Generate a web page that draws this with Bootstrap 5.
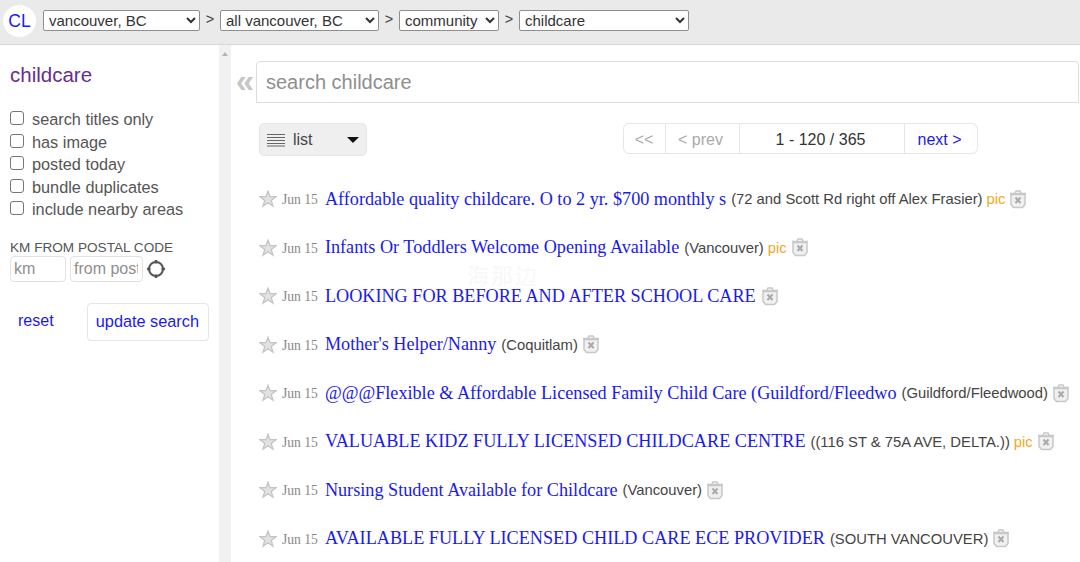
<!doctype html>
<html lang="en">

<head>
  <meta charset="utf-8" />
  <meta name="viewport" content="width=device-width, initial-scale=1" />
  <title>vancouver, BC childcare - craigslist</title>
  <link href="https://cdn.jsdelivr.net/npm/bootstrap@5.3.5/dist/css/bootstrap.min.css" rel="stylesheet" />
  <style>
    html, body {
      height: 562px;
      overflow: hidden;
    }

    body {
      font-family: "Liberation Sans", Arial, sans-serif;
      color: #333;
      background: #fff;
    }

    .top-bar {
      height: 45px;
      background: #eaeaea;
      border-bottom: 1px solid #d8d8d8;
      padding: 0 0 2px 3px;
      font-size: 14.5px;
    }

    .cl-logo {
      width: 33px;
      height: 32px;
      border-radius: 50%;
      background: #fff;
      color: #1a1aff;
      font-size: 17.5px;
      margin-right: 7px;
    }

    .crumb-select {
      height: 21px;
      padding: 0 0 0 1px;
      margin-bottom: 2px;
      font-size: 15px;
      color: #333;
      background-color: #fff;
      border: 1px solid #8f8f8f;
      border-radius: 2px;
    }

    .crumb-sep {
      width: 20px;
      margin-bottom: 2px;
      text-align: center;
      color: #444;
    }

    .page-body {
      height: 517px;
      position: relative;
    }

    .side-panel {
      width: 219px;
      padding: 18px 10px 0;
    }

    .side-title {
      color: #652e91;
      font-size: 20.5px;
      line-height: 24px;
      margin-bottom: 21px;
    }

    .opt-row {
      height: 22.5px;
      margin: 0;
      padding: 0;
      font-size: 16.3px;
      line-height: 22.5px;
      color: #555;
    }

    .opt-row .form-check-input {
      width: 14px;
      height: 14px;
      margin: 0 8px 0 0;
      float: none;
      vertical-align: 0;
      border: 1px solid #767676;
      border-radius: 3px;
    }

    .km-label {
      font-size: 13.6px;
      line-height: 16px;
      color: #555;
      margin-top: 19px;
    }

    .km-row {
      gap: 4px;
    }

    .km-input {
      height: 26px;
      padding: 0 4px 0 3px;
      font-size: 16px;
      border: 1px solid #e2e2e2;
      border-radius: 4px;
      color: #555;
      outline: 0;
    }

    .km-input::placeholder,
    .search-box::placeholder {
      color: #8f8f8f;
      opacity: 1;
    }

    .km-short {
      width: 56px;
    }

    .km-long {
      width: 73px;
    }

    .km-target {
      margin-left: -1px;
    }

    .form-actions {
      margin-top: 21px;
    }

    .reset-link {
      color: #1a1aee;
      font-size: 16px;
      text-decoration: none;
      margin: 0 0 2px 8px;
    }

    .update-btn {
      height: 38px;
      padding: 0 9px 0 8px;
      font-size: 16.3px;
      color: #1a1aee;
      background: #fff;
      border: 1px solid #e6e6e6;
      border-radius: 4px;
    }

    .side-scroll {
      width: 12px;
      background: #f1f1f1;
      padding-top: 7px;
    }

    .scroll-arrow {
      display: block;
      width: 0;
      height: 0;
      margin: 0 auto;
      border-left: 3.5px solid transparent;
      border-right: 3.5px solid transparent;
      border-bottom: 4px solid #b5b5b5;
    }

    .main-panel {
      min-width: 0;
      padding-top: 16px;
    }

    .back-arrows {
      width: 25px;
      text-align: right;
      color: #c6c6c6;
      font-size: 33px;
      line-height: 40px;
      padding-right: 2px;
      font-weight: bold;
    }

    .search-box {
      height: 42px;
      padding: 0 9px;
      font-size: 20px;
      color: #555;
      border: 1px solid #dedede;
      border-radius: 4px 4px 0 0;
      outline: 0;
      width: 823px;
    }

    .tool-row {
      height: 33px;
      margin: 20px 0 0 28px;
      width: 719px;
    }

    .view-btn {
      width: 108px;
      height: 33px;
      padding: 0 7px;
      background: #efefef;
      border: 1px solid #e6e6e6;
      border-radius: 5px;
      font-size: 16px;
      color: #444;
    }

    .view-caret {
      width: 0;
      height: 0;
      border-left: 6px solid transparent;
      border-right: 6px solid transparent;
      border-top: 6px solid #111;
    }

    .pager {
      height: 31px;
      font-size: 16px;
      border: 1px solid #e6e6e6;
      border-radius: 6px;
      margin-left: auto;
    }

    .pager > span,
    .pager > a {
      display: flex;
      align-items: center;
      justify-content: center;
      height: 100%;
      padding-top: 2px;
      text-decoration: none;
    }

    .pager > * + * {
      border-left: 1px solid #e6e6e6;
    }

    .pg-muted {
      color: #aaa;
    }

    .pg-first { width: 41px; padding-right: 1px; }
    .pg-prev { width: 74px; padding-right: 4px; }
    .pg-range { width: 165px; color: #333; padding-right: 3px; }
    .pg-next { width: 73px; color: #1a1aee; padding-right: 3px; }

    .result-list {
      margin: 19px 0 0 28px;
      white-space: nowrap;
    }

    .result-row {
      height: 48.5px;
      padding: 0;
      border: 0;
      background: transparent;
    }

    .star-icon {
      width: 18px;
      height: 18px;
      margin-right: 5px;
      flex: none;
    }

    .post-date {
      font-family: "Liberation Serif", "Times New Roman", serif;
      font-size: 13.6px;
      color: #888;
      margin-right: 7px;
      position: relative;
      top: 1px;
    }

    .post-title {
      font-family: "Liberation Serif", "Times New Roman", serif;
      font-size: 18.2px;
      color: #1a1aee;
      text-decoration: none;
      margin-right: 5px;
    }

    .post-hood {
      font-size: 14.8px;
      color: #444;
      margin-right: 4px;
    }

    .post-pic {
      font-size: 14.8px;
      color: #f5a623;
      margin-right: 4px;
    }

    .hide-icon {
      width: 18px;
      height: 19px;
      flex: none;
    }

    .watermark {
      position: absolute;
      left: 467px;
      top: 219px;
      font-family: "Noto Sans CJK SC", sans-serif;
      font-size: 22px;
      letter-spacing: 2px;
      line-height: 20px;
      color: #f8f8f8;
    }
  </style>
</head>

<body>
  <div class="top-bar d-flex align-items-center">
    <a class="cl-logo d-flex align-items-center justify-content-center text-decoration-none" href="#">CL</a>
    <select class="crumb-select" style="width: 157px"><option>vancouver, BC</option></select>
    <span class="crumb-sep">&gt;</span>
    <select class="crumb-select" style="width: 159px"><option>all vancouver, BC</option></select>
    <span class="crumb-sep">&gt;</span>
    <select class="crumb-select" style="width: 100px"><option>community</option></select>
    <span class="crumb-sep">&gt;</span>
    <select class="crumb-select" style="width: 170px"><option>childcare</option></select>
  </div>

  <div class="page-body d-flex">
    <form class="side-panel flex-shrink-0">
      <div class="side-title">childcare</div>
      <label class="opt-row d-block"><input class="form-check-input" type="checkbox" />search titles only</label>
      <label class="opt-row d-block"><input class="form-check-input" type="checkbox" />has image</label>
      <label class="opt-row d-block"><input class="form-check-input" type="checkbox" />posted today</label>
      <label class="opt-row d-block"><input class="form-check-input" type="checkbox" />bundle duplicates</label>
      <label class="opt-row d-block"><input class="form-check-input" type="checkbox" />include nearby areas</label>
      <div class="km-label">KM FROM POSTAL CODE</div>
      <div class="km-row d-flex align-items-center">
        <input class="km-input km-short" placeholder="km" />
        <input class="km-input km-long" placeholder="from postal" />
        <svg class="km-target" width="20" height="20" viewBox="0 0 20 20" fill="none" stroke="#555">
          <circle cx="10" cy="10" r="7" stroke-width="2" />
          <path d="M10 1v3.500M10 15.500V19M1 10h3.500M15.500 10H19" stroke-width="2.400" />
        </svg>
      </div>
      <div class="form-actions d-flex align-items-center justify-content-between">
        <a class="reset-link" href="#">reset</a>
        <button class="update-btn" type="button">update search</button>
      </div>
    </form>

    <div class="side-scroll flex-shrink-0"><span class="scroll-arrow"></span></div>

    <div class="main-panel flex-grow-1">
      <div class="d-flex">
        <div class="back-arrows">&laquo;</div>
        <input class="search-box" placeholder="search childcare" />
      </div>

      <div class="tool-row d-flex align-items-start">
        <div class="view-btn d-flex align-items-center">
          <svg width="18" height="14" viewBox="0 0 18 14" stroke="#666" stroke-width="1.2">
            <path d="M0 1.5h18M0 4.5h18M0 7.5h18M0 10.5h18M0 13h18" />
          </svg>
          <span class="ms-2 flex-grow-1">list</span>
          <span class="view-caret"></span>
        </div>
        <div class="pager d-flex">
          <span class="pg-first pg-muted">&lt;&lt;</span>
          <span class="pg-prev pg-muted">&lt; prev</span>
          <span class="pg-range">1 - 120 / 365</span>
          <a class="pg-next" href="#">next &gt;</a>
        </div>
      </div>

      <div class="result-list list-group list-group-flush" id="results"></div>
    </div>

    <div class="watermark">海那边</div>
  </div>

  <script>
    const posts = [
      { title: "Affordable quality childcare. O to 2 yr. $700 monthly s", hood: "(72 and Scott Rd right off Alex Frasier)", pic: true },
      { title: "Infants Or Toddlers Welcome Opening Available", hood: "(Vancouver)", pic: true },
      { title: "LOOKING FOR BEFORE AND AFTER SCHOOL CARE", hood: "", pic: false },
      { title: "Mother's Helper/Nanny", hood: "(Coquitlam)", pic: false },
      { title: "@@@Flexible & Affordable Licensed Family Child Care (Guildford/Fleedwo", hood: "(Guildford/Fleedwood)", pic: false },
      { title: "VALUABLE KIDZ FULLY LICENSED CHILDCARE CENTRE", hood: "((116 ST & 75A AVE, DELTA.))", pic: true },
      { title: "Nursing Student Available for Childcare", hood: "(Vancouver)", pic: false },
      { title: "AVAILABLE FULLY LICENSED CHILD CARE ECE PROVIDER", hood: "(SOUTH VANCOUVER)", pic: false }
    ];

    const starSvg = `<svg class="star-icon" viewBox="0 0 18 18"><path d="M9 1.200l2.100 5.500h5.800l-4.700 3.700 1.800 5.800L9 12.800l-5 3.400 1.800-5.800-4.700-3.700h5.800z" fill="#e2e2e2" stroke="#c4c4c4" stroke-width="1.300"/></svg>`;
    const hideSvg = `<svg class="hide-icon" viewBox="0 0 18 19" fill="none"><path d="M2 4.500h14v10l-2.500 3h-9L2 14.500z" fill="#f0f0f0" stroke="#c8c8c8" stroke-width="1.500"/><path d="M1 3.500h16M6 3l1-2h4l1 2" stroke="#c8c8c8" stroke-width="1.500"/><path d="M6.500 7.500l5 5.500M11.500 7.500l-5 5.500" stroke="#aaa" stroke-width="2"/></svg>`;

    const list = document.getElementById("results");
    posts.forEach((post) => {
      const hood = post.hood ? `<span class="post-hood">${post.hood.replace(/&/g, "&amp;")}</span>` : "";
      const pic = post.pic ? `<span class="post-pic">pic</span>` : "";
      list.innerHTML += `
        <div class="result-row list-group-item d-flex align-items-center">
          ${starSvg}
          <span class="post-date">Jun 15</span>
          <a class="post-title" href="#">${post.title.replace(/&/g, "&amp;")}</a>
          ${hood}${pic}${hideSvg}
        </div>
      `;
    });
  </script>

  <script src="https://cdn.jsdelivr.net/npm/bootstrap@5.3.5/dist/js/bootstrap.bundle.min.js"></script>
</body>

</html>
